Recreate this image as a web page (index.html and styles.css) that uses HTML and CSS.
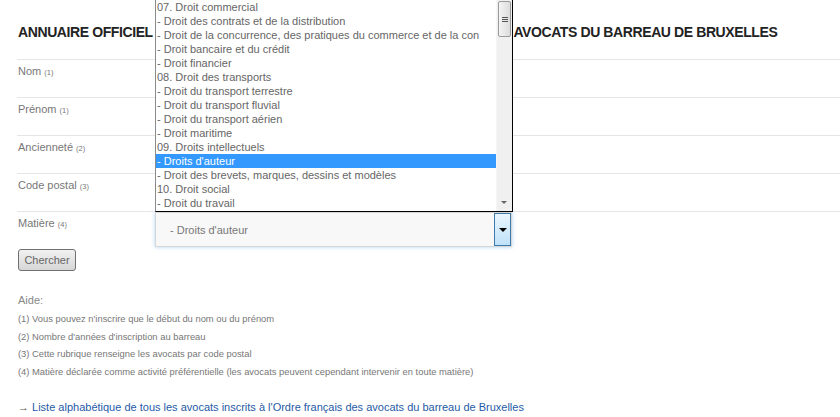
FILE: index.html
```html
<!DOCTYPE html>
<html lang="fr">
<head>
    <meta charset="UTF-8">
    <title>Annuaire officiel</title>
    <link rel="stylesheet" href="styles.css">
</head>
<body>
    <div class="page">
        <h1 class="title">ANNUAIRE OFFICIEL DES MEMBRES INSCRITS DE L'ORDRE FRANÇAIS DES AVOCATS DU BARREAU DE BRUXELLES</h1>

        <form class="search" onsubmit="return false">
            <div class="row"><label class="label">Nom <small>(1)</small></label></div>
            <div class="row"><label class="label">Prénom <small>(1)</small></label></div>
            <div class="row"><label class="label">Ancienneté <small>(2)</small></label></div>
            <div class="row"><label class="label">Code postal <small>(3)</small></label></div>
            <div class="row row-last">
                <label class="label">Matière <small>(4)</small></label>
                <div class="field">
                    <div class="dropdown">
                        <ul class="options">
                            <li>07. Droit commercial</li>
                            <li>- Droit des contrats et de la distribution</li>
                            <li>- Droit de la concurrence, des pratiques du commerce et de la con</li>
                            <li>- Droit bancaire et du crédit</li>
                            <li>- Droit financier</li>
                            <li>08. Droit des transports</li>
                            <li>- Droit du transport terrestre</li>
                            <li>- Droit du transport fluvial</li>
                            <li>- Droit du transport aérien</li>
                            <li>- Droit maritime</li>
                            <li>09. Droits intellectuels</li>
                            <li class="selected">- Droits d'auteur</li>
                            <li>- Droit des brevets, marques, dessins et modèles</li>
                            <li>10. Droit social</li>
                            <li>- Droit du travail</li>
                        </ul>
                        <div class="scrollbar">
                            <div class="thumb"><span></span><span></span><span></span></div>
                            <div class="scroll-down"></div>
                        </div>
                    </div>
                    <div class="select">
                        <span class="select-value">- Droits d'auteur</span>
                        <span class="select-arrow"></span>
                    </div>
                </div>
            </div>
            <button class="submit" type="submit">Chercher</button>
        </form>

        <div class="help">
            <p class="help-title">Aide:</p>
            <p>(1) Vous pouvez n'inscrire que le début du nom ou du prénom</p>
            <p>(2) Nombre d'années d'inscription au barreau</p>
            <p>(3) Cette rubrique renseigne les avocats par code postal</p>
            <p>(4) Matière déclarée comme activité préférentielle (les avocats peuvent cependant intervenir en toute matière)</p>
        </div>

        <p class="all-link"><span class="arrow">&rarr;</span> <a href="#">Liste alphabétique de tous les avocats inscrits à l'Ordre français des avocats du barreau de Bruxelles</a></p>
    </div>
</body>
</html>
```

FILE: styles.css
```css
* {
    margin: 0;
    padding: 0;
    box-sizing: border-box;
}

html, body {
    height: 100%;
    overflow: hidden;
}

body {
    background: #fff;
    font-family: "Liberation Sans", Arial, sans-serif;
    font-size: 11px;
    color: #666;
}

.page {
    padding-left: 17px;
}

.title {
    font-size: 14px;
    font-weight: bold;
    line-height: 16px;
    color: #222;
    white-space: nowrap;
    letter-spacing: -0.4px;
    padding: 24px 0 0 1px;
    height: 59px;
}

.row {
    display: flex;
    border-top: 1px solid #e6e6e6;
    height: 38px;
}

.row-last {
    height: auto;
}

.label {
    width: 138px;
    padding: 4px 0 0 1px;
    line-height: 14px;
    font-size: 11px;
    color: #777;
}

.label small {
    font-size: 7.5px;
}

.field {
    position: relative;
    width: 358px;
}

.select {
    display: flex;
    align-items: center;
    height: 35px;
    width: 357px;
    background: #f8f8f8;
    border: 1px solid #d6d6d6;
    box-shadow: 0 0 4px rgba(110, 175, 235, 0.55);
    position: relative;
}

.select-value {
    padding-left: 14px;
    color: #777;
}

.select-arrow {
    position: absolute;
    right: 0;
    top: 0;
    bottom: 0;
    width: 17px;
    border: 1px solid #3f7aad;
    background: linear-gradient(#eaf5fe, #bfe2fa);
}

.select-arrow::after {
    content: '';
    position: absolute;
    left: 4px;
    top: 14px;
    border-left: 4px solid transparent;
    border-right: 4px solid transparent;
    border-top: 4px solid #000;
}

/* open list of the select, drawn over the rows above */
.dropdown {
    position: absolute;
    left: 0;
    bottom: 100%;
    width: 358px;
    height: 213px;
    background: #fff;
    border: 1px solid #000;
    border-left-color: #8a8a8a;
    border-top-color: #8a8a8a;
    overflow: hidden;
    z-index: 2;
}

.options {
    list-style: none;
    width: 340px;
}

.options li {
    height: 14px;
    line-height: 14px;
    padding-left: 1px;
    white-space: nowrap;
    overflow: hidden;
    color: #666;
}

.options li.selected {
    background: #3399ff;
    color: #fff;
}

.scrollbar {
    position: absolute;
    right: 0;
    top: 0;
    bottom: 0;
    width: 16px;
    background: #f0f0f0;
    border-left: 1px solid #f6f6f6;
}

.thumb {
    position: absolute;
    left: 1px;
    right: 1px;
    top: 1px;
    height: 36px;
    border: 1px solid #9a9a9a;
    border-radius: 2px;
    background: linear-gradient(to right, #f4f4f4, #dcdcdc);
    display: flex;
    flex-direction: column;
    align-items: center;
    justify-content: center;
    gap: 1px;
}

.thumb span {
    width: 6px;
    height: 1px;
    background: #555;
}

.scroll-down {
    position: absolute;
    left: 4px;
    bottom: 7px;
    border-left: 3px solid transparent;
    border-right: 3px solid transparent;
    border-top: 3px solid #666;
}

.submit {
    display: block;
    margin: 2px 0 0 1px;
    width: 58px;
    height: 22px;
    font-family: "Liberation Sans", Arial, sans-serif;
    font-size: 11px;
    color: #666;
    border: 1px solid #707070;
    border-radius: 3px;
    background: linear-gradient(#f2f2f2, #d6d6d6);
}

.help {
    margin-top: 22px;
    padding-left: 1px;
}

.help p {
    font-size: 9.4px;
    line-height: 17.6px;
    color: #777;
}

.help .help-title {
    font-size: 11px;
    line-height: 14px;
    color: #888;
    margin-bottom: 3px;
}

.all-link {
    margin-top: 20px;
    padding-left: 1px;
    font-size: 11px;
    line-height: 14px;
}

.all-link .arrow {
    color: #555;
}

.all-link a {
    color: #1f5aa6;
    text-decoration: none;
}
```
